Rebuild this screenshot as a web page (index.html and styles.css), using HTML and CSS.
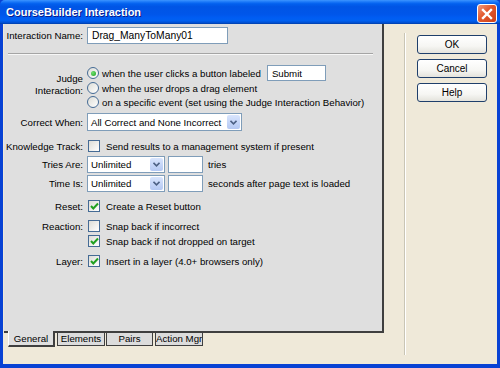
FILE: index.html
```html
<!DOCTYPE html>
<html lang="en">
<head>
    <meta charset="UTF-8">
    <title>CourseBuilder Interaction</title>
    <link rel="stylesheet" href="styles.css">
</head>
<body>
    <div class="window">
        <div class="titlebar">
            <span class="title">CourseBuilder Interaction</span>
            <span class="close">
                <svg width="12" height="12" viewBox="0 0 12 12"><path d="M2 2 L10 10 M10 2 L2 10" stroke="#fff" stroke-width="2.4" stroke-linecap="square"/></svg>
            </span>
        </div>
        <div class="frame">
            <div class="client">
                <div class="main">
                    <div class="panel">
                        <div class="row name-row">
                            <span class="lbl">Interaction Name:</span>
                            <span class="input name-input">Drag_ManyToMany01</span>
                        </div>
                        <div class="hsep"></div>

                        <div class="row judge-row">
                            <span class="lbl two-line">Judge<br>Interaction:</span>
                            <div class="radios">
                                <div class="radio-line first">
                                    <span class="radio checked"></span>when the user clicks a button labeled
                                    <span class="input submit-input">Submit</span>
                                </div>
                                <div class="radio-line"><span class="radio"></span>when the user drops a drag element</div>
                                <div class="radio-line"><span class="radio"></span>on a specific event (set using the Judge Interaction Behavior)</div>
                            </div>
                        </div>

                        <div class="row correct-row">
                            <span class="lbl">Correct When:</span>
                            <span class="select wide"><span class="val">All Correct and None Incorrect</span><span class="arrow"><svg width="7" height="5" viewBox="0 0 7 5"><path d="M0.5 0.8 L3.5 3.8 L6.5 0.8" fill="none" stroke="#4d6185" stroke-width="1.6"/></svg></span></span>
                        </div>

                        <div class="row check-row knowledge-row">
                            <span class="lbl">Knowledge Track:</span>
                            <span class="check"></span>Send results to a management system if present
                        </div>

                        <div class="row field-row tries-row">
                            <span class="lbl">Tries Are:</span>
                            <span class="select narrow"><span class="val">Unlimited</span><span class="arrow"><svg width="7" height="5" viewBox="0 0 7 5"><path d="M0.5 0.8 L3.5 3.8 L6.5 0.8" fill="none" stroke="#4d6185" stroke-width="1.6"/></svg></span></span>
                            <span class="input small-input"></span>
                            <span class="after">tries</span>
                        </div>

                        <div class="row field-row time-row">
                            <span class="lbl">Time Is:</span>
                            <span class="select narrow"><span class="val">Unlimited</span><span class="arrow"><svg width="7" height="5" viewBox="0 0 7 5"><path d="M0.5 0.8 L3.5 3.8 L6.5 0.8" fill="none" stroke="#4d6185" stroke-width="1.6"/></svg></span></span>
                            <span class="input small-input"></span>
                            <span class="after">seconds after page text is loaded</span>
                        </div>

                        <div class="row check-row reset-row">
                            <span class="lbl">Reset:</span>
                            <span class="check on"><svg width="9" height="9" viewBox="0 0 9 9"><path d="M1 4 L3.3 6.5 L8 1.5" fill="none" stroke="#21a121" stroke-width="2"/></svg></span>Create a Reset button
                        </div>

                        <div class="row check-row reaction-row">
                            <span class="lbl">Reaction:</span>
                            <span class="check"></span>Snap back if incorrect
                        </div>
                        <div class="row check-row snap-row">
                            <span class="lbl"></span>
                            <span class="check on"><svg width="9" height="9" viewBox="0 0 9 9"><path d="M1 4 L3.3 6.5 L8 1.5" fill="none" stroke="#21a121" stroke-width="2"/></svg></span>Snap back if not dropped on target
                        </div>

                        <div class="row check-row layer-row">
                            <span class="lbl">Layer:</span>
                            <span class="check on"><svg width="9" height="9" viewBox="0 0 9 9"><path d="M1 4 L3.3 6.5 L8 1.5" fill="none" stroke="#21a121" stroke-width="2"/></svg></span>Insert in a layer (4.0+ browsers only)
                        </div>
                    </div>
                    <div class="tabs">
                        <span class="tab active">General</span>
                        <span class="tab t-elements">Elements</span>
                        <span class="tab t-pairs">Pairs</span>
                        <span class="tab t-action">Action Mgr</span>
                    </div>
                </div>
                <div class="side">
                    <div class="vsep"></div>
                    <div class="buttons">
                        <span class="btn">OK</span>
                        <span class="btn">Cancel</span>
                        <span class="btn">Help</span>
                    </div>
                </div>
            </div>
        </div>
    </div>
</body>
</html>
```
FILE: styles.css
```css
* {
    box-sizing: border-box;
}

body {
    margin: 0;
    font-family: "Liberation Sans", Arial, sans-serif;
    font-size: 9.7px;
    color: #000;
    background: #fff;
}

.window {
    width: 500px;
    height: 368px;
    display: flex;
    flex-direction: column;
    background: #0842d4;
}

.titlebar {
    height: 24px;
    display: flex;
    align-items: center;
    justify-content: space-between;
    padding: 0 3px 0 6px;
    background: linear-gradient(to bottom, #3d95ff 0%, #1a78f8 8%, #0260ee 16%, #0055e5 28%, #0056ea 60%, #005df3 75%, #0060f0 86%, #0050d4 94%, #003ea8 100%);
    border-radius: 5px 5px 0 0;
}

.title {
    color: #fff;
    font-weight: bold;
    font-size: 11px;
    text-shadow: 1px 1px 0 #0a1a8a;
}

.close {
    width: 20px;
    height: 19px;
    margin-top: 3px;
    border: 1px solid #fff;
    border-radius: 3px;
    background: linear-gradient(135deg, #f19a7e 0%, #e2572c 45%, #cc4119 100%);
    display: flex;
    align-items: center;
    justify-content: center;
}

.frame {
    flex: 1;
    display: flex;
    padding: 0 3px 4px;
}

.client {
    flex: 1;
    display: flex;
    background: #efe9d9;
}

.main {
    width: 381px;
    display: flex;
    flex-direction: column;
}

.panel {
    margin-left: 1px;
    height: 309px;
    padding-top: 2px;
    background: #dfdfdf;
    border-right: 2px solid #3f3f3f;
    border-bottom: 2px solid #3f3f3f;
}

.row {
    display: flex;
    align-items: center;
    white-space: nowrap;
}

.lbl {
    width: 79px;
    margin-right: 4px;
    text-align: right;
    flex-shrink: 0;
}

.input {
    display: inline-block;
    height: 17px;
    line-height: 15px;
    padding-left: 3px;
    border: 1px solid #7f9db9;
    background: #fff;
}

.name-row {
    height: 18px;
}

.name-input {
    width: 141px;
    padding-left: 4px;
    font-size: 10.3px;
}

.hsep {
    margin: 9px 9px 10px 4px;
    height: 2px;
    border-top: 1px solid #a5a5a5;
    border-bottom: 1px solid #f7f7f7;
}

.judge-row {
    align-items: flex-start;
}

.two-line {
    padding-top: 8px;
    line-height: 12px;
}

.radio-line {
    height: 14px;
    display: flex;
    align-items: center;
}

.radio-line.first {
    height: 16px;
}

.radio {
    width: 12px;
    height: 12px;
    margin-right: 3px;
    border: 1px solid #456b95;
    border-radius: 50%;
    background: linear-gradient(135deg, #dcdcd6, #fff);
    display: flex;
    align-items: center;
    justify-content: center;
}

.radio.checked::after {
    content: "";
    width: 5px;
    height: 5px;
    border-radius: 50%;
    background: radial-gradient(circle at 35% 35%, #6fe06f, #21a121);
}

.submit-input {
    width: 59px;
    height: 16px;
    margin-left: 6px;
    padding-left: 4px;
}

.select {
    height: 18px;
    display: flex;
    align-items: center;
    border: 1px solid #7f9db9;
    background: #fff;
}

.select .val {
    flex: 1;
    padding-left: 3px;
    overflow: hidden;
}

.select .arrow {
    width: 13px;
    height: 14px;
    margin-right: 1px;
    border-radius: 2px;
    background: linear-gradient(to bottom, #d9e5fd, #b4c8f3);
    display: flex;
    align-items: center;
    justify-content: center;
}

.wide {
    width: 155px;
}

.narrow {
    width: 78px;
    height: 17px;
}

.narrow .arrow {
    height: 13px;
}

.correct-row {
    margin-top: 4px;
}

.small-input {
    width: 35px;
    margin-left: 3px;
}

.after {
    margin-left: 5px;
}

.field-row {
    height: 17px;
    margin-top: 2px;
}

.check-row {
    height: 14px;
}

.check {
    width: 12px;
    height: 12px;
    margin: 0 6px 0 1px;
    border: 1px solid #456b95;
    background: linear-gradient(135deg, #dcdcd6, #fff);
    display: flex;
    align-items: center;
    justify-content: center;
}

.knowledge-row {
    height: 16px;
    margin-top: 7px;
}

.reset-row {
    margin-top: 7px;
}

.reaction-row {
    margin-top: 6px;
}

.snap-row {
    margin-top: 1px;
}

.layer-row {
    margin-top: 6px;
}

.tabs {
    display: flex;
    margin-left: 5px;
}

.tab {
    height: 13px;
    line-height: 12px;
    text-align: center;
    white-space: nowrap;
    overflow: hidden;
    background: #dcdcdc;
    border: 1px solid #3f3f3f;
    border-top: none;
}

.tab.active {
    width: 47px;
    height: 16px;
    margin-top: -2px;
    padding-top: 2px;
    background: #dfdfdf;
    border-left: 1px solid #fff;
    border-right: 2px solid #3f3f3f;
    border-bottom: 2px solid #3f3f3f;
}

.t-elements {
    width: 48px;
    margin-left: 2px;
}

.t-pairs {
    width: 47px;
    margin-left: 1px;
}

.t-action {
    width: 48px;
    margin-left: 2px;
}

.side {
    flex: 1;
    display: flex;
    align-items: flex-start;
}

.vsep {
    width: 2px;
    height: 322px;
    margin: 9px 0 0 20px;
    border-left: 1px solid #c9c5b5;
    border-right: 1px solid #fff;
}

.buttons {
    margin: 11px 0 0 11px;
    display: flex;
    flex-direction: column;
    gap: 5px;
}

.btn {
    width: 70px;
    height: 19px;
    line-height: 17px;
    text-align: center;
    border: 1px solid #1f3f6b;
    border-radius: 3px;
    background: linear-gradient(to bottom, #ffffff 0%, #f6f6f3 60%, #e4e3dc 100%);
    font-size: 10px;
}
```
